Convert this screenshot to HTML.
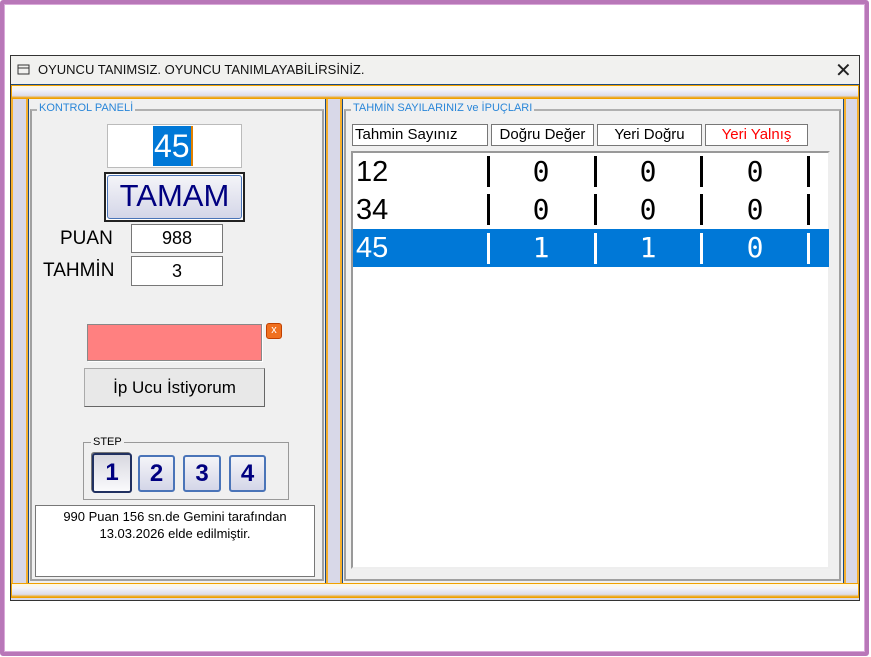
<!DOCTYPE html>
<html><head><meta charset="utf-8"><style>
*{margin:0;padding:0;box-sizing:border-box}
body{width:871px;height:657px;background:#fff;position:relative;overflow:hidden;font-family:"Liberation Sans",sans-serif}
.a{position:absolute}
.frame{left:0;top:0;width:869px;height:656px;border:4px solid #b877b8;border-radius:3px;box-shadow:inset 0 0 0 1px #d9a9d9}
.win{left:10px;top:55px;width:850px;height:546px;background:#d8d8e8;border:1px solid #333}
.title{left:11px;top:56px;width:848px;height:29px;background:#f1f1ef;border-bottom:1px solid #1c4a80}
.obar{background:linear-gradient(#fff8e0,#f5f5fa 30%,#dcdcec 80%,#f0a000);border:1px solid #f0a000}
.grp{background:#f0f0f0;border-left:1px solid #1c4a80;border-right:1px solid #1c4a80}
.gb{border:2px solid #a0a0a0;border-top-color:#b0b0b0}
.gl{background:#f0f0f0;color:#2a86d8;font-size:11px;padding:0 2px}
.box{background:#fff;border:1px solid #777}
.btn3{background:linear-gradient(#f4f4f8,#d4d6e8);border:2px solid #4a74b8;border-radius:3px;color:#000080;font-weight:bold;font-size:24px;text-align:center}
.hd{top:124px;height:22px;border:1px solid #777;background:#fff;font-size:15px;text-align:center;line-height:20px}
.n{font-size:29px;left:356px;line-height:38px;height:38px}
.d{font-family:"DejaVu Sans Mono","Liberation Mono",monospace;font-size:28px;line-height:38px;width:30px;text-align:center}
.p{width:3px;height:31px;background:#000}
.w .p{background:#fff}
</style></head><body>
<div class="a frame"></div>
<div class="a win"></div>
<div class="a title"></div>
<svg class="a" style="left:17px;top:64px" width="14" height="12"><rect x="1" y="1" width="11" height="9" fill="none" stroke="#333"/><line x1="1" y1="4" x2="12" y2="4" stroke="#333"/></svg>
<div class="a" style="left:38px;top:62px;font-size:13px;color:#111">OYUNCU TANIMSIZ. OYUNCU TANIMLAYABİLİRSİNİZ.</div>
<div class="a" style="left:835px;top:58px;font-size:20px;color:#222">✕</div>
<div class="a obar" style="left:11px;top:85px;width:848px;height:14px"></div>
<div class="a obar" style="left:11px;top:583px;width:848px;height:15px"></div>
<div class="a" style="left:11px;top:99px;width:17px;height:484px;background:#d8d8e8;border-left:2px solid #f5b030;border-right:2px solid #f5b030"></div>
<div class="a" style="left:325px;top:99px;width:18px;height:484px;background:#d8d8e8;border-left:1px solid #1c4a80;border-right:1px solid #1c4a80;box-shadow:inset 2px 0 #f5b030,inset -2px 0 #f5b030"></div>
<div class="a" style="left:843px;top:99px;width:16px;height:484px;background:#d8d8e8;border-left:1px solid #1c4a80;box-shadow:inset 2px 0 #f5b030,inset -2px 0 #f5b030"></div>
<div class="a grp" style="left:28px;top:99px;width:298px;height:484px"></div>
<div class="a gb" style="left:30px;top:109px;width:294px;height:472px"></div>
<div class="a gl" style="left:37px;top:102px">KONTROL PANELİ</div>
<div class="a box" style="left:107px;top:124px;width:135px;height:44px;border-color:#bbb"></div>
<div class="a" style="left:153px;top:126px;height:40px;background:#0078d7;color:#fff;font-size:32px;line-height:40px;padding:0 1px;border-right:2px solid #e08000">45</div>
<div class="a" style="left:104px;top:172px;width:141px;height:50px;border:2px solid #222;background:#fff"></div>
<div class="a btn3" style="left:107px;top:175px;width:135px;height:44px;font-weight:normal;font-size:31px;line-height:40px;border-width:1px">TAMAM</div>
<div class="a" style="left:60px;top:228px;font-size:19px">PUAN</div>
<div class="a box" style="left:131px;top:224px;width:92px;height:29px;font-size:18px;text-align:center;line-height:27px">988</div>
<div class="a" style="left:43px;top:260px;font-size:19px">TAHMİN</div>
<div class="a box" style="left:131px;top:256px;width:92px;height:30px;font-size:18px;text-align:center;line-height:28px">3</div>
<div class="a" style="left:87px;top:324px;width:175px;height:37px;background:#ff8080;border:1px solid #888;box-shadow:1px 1px #fff"></div>
<div class="a" style="left:266px;top:323px;width:16px;height:16px;border-radius:3px;background:#f07020;border:1px solid #c04000;color:#fff;font-size:11px;line-height:13px;text-align:center">x</div>
<div class="a" style="left:84px;top:368px;width:181px;height:39px;background:#e8e8e8;border:1px solid #aaa;border-right-color:#666;border-bottom-color:#666;font-size:17px;text-align:center;line-height:37px">İp Ucu İstiyorum</div>
<div class="a gb" style="left:83px;top:442px;width:206px;height:58px;border-width:1px;border-color:#999"></div>
<div class="a" style="left:91px;top:436px;background:#f0f0f0;font-size:11px;padding:0 2px">STEP</div>
<div class="a btn3" style="left:92px;top:453px;width:40px;height:40px;line-height:36px;border-color:#203060;background:linear-gradient(#d8d8e0,#fafafc);box-shadow:-1px -1px #777">1</div>
<div class="a btn3" style="left:138px;top:455px;width:37px;height:37px;line-height:33px">2</div>
<div class="a btn3" style="left:183px;top:455px;width:38px;height:37px;line-height:33px">3</div>
<div class="a btn3" style="left:229px;top:455px;width:37px;height:37px;line-height:33px">4</div>
<div class="a box" style="left:35px;top:505px;width:280px;height:72px;font-size:13px;text-align:center;line-height:17px;padding-top:2px">990 Puan 156 sn.de Gemini tarafından<br>13.03.2026 elde edilmiştir.</div>
<div class="a grp" style="left:342px;top:99px;width:501px;height:484px;border:0;border-left:1px solid #1c4a80"></div>
<div class="a gb" style="left:344px;top:109px;width:497px;height:472px"></div>
<div class="a gl" style="left:351px;top:102px">TAHMİN SAYILARINIZ ve İPUÇLARI</div>
<div class="a hd" style="left:352px;width:136px;text-align:left;padding-left:2px">Tahmin Sayınız</div>
<div class="a hd" style="left:491px;width:103px">Doğru Değer</div>
<div class="a hd" style="left:597px;width:105px">Yeri Doğru</div>
<div class="a hd" style="left:705px;width:103px;color:#f00">Yeri Yalnış</div>
<div class="a" style="left:351px;top:151px;width:479px;height:418px;background:#fff;border:2px solid #999;border-right-color:#eee;border-bottom-color:#eee"></div>

<div class="a" style="left:0;top:153px">
 <div class="a n" style="top:0">12</div>
 <div class="a p" style="left:487px;top:3px"></div><div class="a d" style="left:526px;top:0">0</div>
 <div class="a p" style="left:594px;top:3px"></div><div class="a d" style="left:633px;top:0">0</div>
 <div class="a p" style="left:700px;top:3px"></div><div class="a d" style="left:740px;top:0">0</div>
 <div class="a p" style="left:807px;top:3px"></div>
</div>
<div class="a" style="left:0;top:191px">
 <div class="a n" style="top:0">34</div>
 <div class="a p" style="left:487px;top:3px"></div><div class="a d" style="left:526px;top:0">0</div>
 <div class="a p" style="left:594px;top:3px"></div><div class="a d" style="left:633px;top:0">0</div>
 <div class="a p" style="left:700px;top:3px"></div><div class="a d" style="left:740px;top:0">0</div>
 <div class="a p" style="left:807px;top:3px"></div>
</div>
<div class="a" style="left:353px;top:229px;width:476px;height:38px;background:#0078d7"></div>
<div class="a w" style="left:0;top:229px;color:#fff">
 <div class="a n" style="top:0">45</div>
 <div class="a p" style="left:487px;top:4px"></div><div class="a d" style="left:526px;top:0">1</div>
 <div class="a p" style="left:594px;top:4px"></div><div class="a d" style="left:633px;top:0">1</div>
 <div class="a p" style="left:700px;top:4px"></div><div class="a d" style="left:740px;top:0">0</div>
 <div class="a p" style="left:807px;top:4px"></div>
</div>
</body></html>
